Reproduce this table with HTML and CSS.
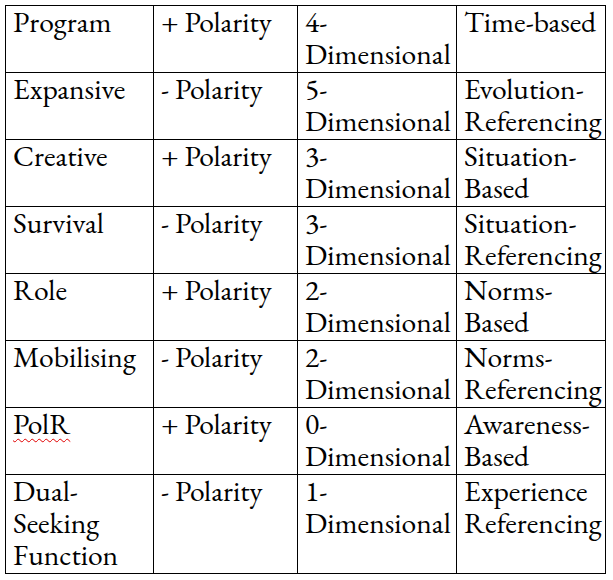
FILE: index.html
```html
<!DOCTYPE html>
<html>
<head>
<meta charset="utf-8">
<link rel="stylesheet" href="styles.css">
</head>
<body>
<table class="grid">
  <colgroup>
    <col class="c1"><col class="c2"><col class="c3"><col class="c4">
  </colgroup>
  <tr><td>Program</td><td>+ Polarity</td><td>4-<br>Dimensional</td><td>Time-based</td></tr>
  <tr><td>Expansive</td><td>- Polarity</td><td>5-<br>Dimensional</td><td>Evolution-<br>Referencing</td></tr>
  <tr><td>Creative</td><td>+ Polarity</td><td>3-<br>Dimensional</td><td>Situation-<br>Based</td></tr>
  <tr><td>Survival</td><td>- Polarity</td><td>3-<br>Dimensional</td><td>Situation-<br>Referencing</td></tr>
  <tr><td>Role</td><td>+ Polarity</td><td>2-<br>Dimensional</td><td>Norms-<br>Based</td></tr>
  <tr><td>Mobilising</td><td>- Polarity</td><td>2-<br>Dimensional</td><td>Norms-<br>Referencing</td></tr>
  <tr><td><span class="spell">PolR</span></td><td>+ Polarity</td><td>0-<br>Dimensional</td><td>Awareness-<br>Based</td></tr>
  <tr><td>Dual-<br>Seeking<br>Function</td><td>- Polarity</td><td>1-<br>Dimensional</td><td>Experience<br>Referencing</td></tr>
</table>
</body>
</html>
```
FILE: styles.css
```css
html, body {
  margin: 0;
  background: #ffffff;
}
body {
  padding: 5px 0 0 5px;
}
.grid {
  border-collapse: collapse;
  table-layout: fixed;
  width: 601px;
  font-family: "EB Garamond", "Liberation Serif", serif;
  font-size: 29.6px;
  line-height: 32.2px;
  color: #000;
}
.c1 { width: 148px; }
.c2 { width: 144px; }
.c3 { width: 159px; }
.c4 { width: 149px; }
.grid td {
  border: 1px solid #000;
  padding: 0 1px 1.6px 7px;
  vertical-align: top;
  white-space: nowrap;
}
.spell {
  text-decoration: underline wavy #e00000;
  text-decoration-thickness: 1px;
  text-underline-offset: 4px;
}
```
